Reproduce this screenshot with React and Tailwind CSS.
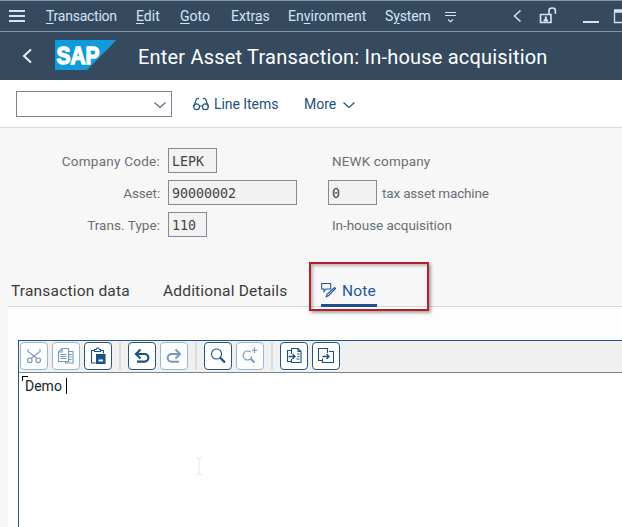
import React from 'react'

const menuItems = [
  { before: '', key: 'T', after: 'ransaction', style: 'w-[90px] tracking-[-0.25px]' },
  { before: '', key: 'E', after: 'dit', style: 'w-[44px]' },
  { before: '', key: 'G', after: 'oto', style: 'w-[51px]' },
  { before: 'Extr', key: 'a', after: 's', style: 'w-[57px]' },
  { before: 'En', key: 'v', after: 'ironment', style: 'w-[97px]' },
  { before: 'S', key: 'y', after: 'stem', style: 'w-[59px] tracking-[-0.15px]' },
]

const icons = {
  cut: (
    <>
      <path d="M8 7v2.500l9 7M20 7v2.500l-9 7" />
      <circle cx="9.800" cy="18.300" r="2.300" />
      <circle cx="18.200" cy="18.300" r="2.300" />
    </>
  ),
  copy: (
    <>
      <path d="M10 6.500h6.500v13H6.500V10zM10 6.500V10H6.500M8.500 12.500h6M8.500 14.500h6M8.500 16.500h6" />
      <path d="M16.500 9.500h4.500v11.500h-7.500v-1.500M16.500 12.500h3M16.500 15h3M16.500 17.500h3" />
    </>
  ),
  paste: (
    <>
      <path d="M10.500 8.500h-3v12.500h4M16.500 8.500h3v3M10.500 9.500v-2h1.500l1-1.500h1.500l1 1.500h1v2z" />
      <path d="M12.500 12.500H21V21.500h-8.500z" fill="currentColor" />
      <path d="M14.500 18.500H19" stroke="#fff" strokeWidth="2" />
    </>
  ),
  undo: <path d="M12.500 7.500 8 12l4.500 4.500M8 12h8.500a3.700 3.700 0 0 1 0 7.700H9" strokeWidth="2.200" />,
  redo: <path d="m15.500 7.500 4.500 4.500-4.500 4.500M20 12h-8.500a3.700 3.700 0 0 0 0 7.700H19" strokeWidth="2" />,
  find: (
    <>
      <circle cx="12.500" cy="12" r="5" />
      <path d="m16 15.500 5 5" strokeWidth="2.200" />
    </>
  ),
  findNext: (
    <>
      <path d="M14.500 10a4.500 4.500 0 1 0 1.500 4.500M18.500 5.500v5.500M15.700 8.300h5.800" />
      <path d="m14.800 17 3.700 3.500" strokeWidth="2" />
    </>
  ),
  load: (
    <>
      <path d="M11.500 8.500h-4v11h4M11.500 12V6.500h6.500l3 3v11h-9.500v-3.500M18 6.500v3h3M17 12h2.500M17.500 14.500h2M16.500 17h3" />
      <path d="M8.500 14.500h6M12.500 12l2.500 2.500-2.500 2.500" strokeWidth="1.400" />
    </>
  ),
  save: (
    <>
      <path d="M15.500 11v-4.500h-9v12h4M17 9.500h4.500v11h-11v-4" />
      <path d="M10.500 14.500H17M14.500 12l2.500 2.500-2.500 2.500" strokeWidth="1.400" />
    </>
  ),
}

const editorGroups = [
  [
    { name: 'cut', disabled: true },
    { name: 'copy', disabled: true },
    { name: 'paste' },
  ],
  [{ name: 'undo' }, { name: 'redo', disabled: true }],
  [{ name: 'find' }, { name: 'findNext', disabled: true }],
  [{ name: 'load' }, { name: 'save' }],
]

const EditorButton = ({ name, disabled }) => (
  <button
    aria-label={name}
    disabled={disabled}
    className={
      disabled
        ? 'w-7 h-7 rounded-[4px] border border-[#9bb7d2] bg-[#fcfdff] text-[#7998b8]'
        : 'w-7 h-7 rounded-[4px] border border-[#255782] bg-white text-[#1b5183]'
    }
  >
    <svg
      className="block w-7 h-7 -m-px"
      viewBox="0 0 28 28"
      fill="none"
      stroke="currentColor"
      strokeWidth="1.1"
    >
      {icons[name]}
    </svg>
  </button>
)

const Field = ({ value, className }) => (
  <div
    className={`h-[25px] border border-[#858b93] bg-[#f2f2f2] pl-[3px] leading-[25px] font-['DejaVu_Sans_Mono',monospace] text-[13.3px] text-[#444] ${className}`}
  >
    {value}
  </div>
)

const MenuBar = () => (
  <div className="flex items-center h-8 border-t border-b border-[#8296aa] text-[#d2e5f8]">
    <svg className="w-[17px] h-[14px] ml-[9px] mr-5" viewBox="0 0 17 14" fill="none" stroke="currentColor" strokeWidth="2">
      <path d="M0 2h16M0 7h16M0 12h16" />
    </svg>
    {menuItems.map((item) => (
      <div key={item.key} className={`shrink-0 text-[14px] leading-5 ${item.style}`}>
        {item.before}
        <span className="underline underline-offset-2 decoration-1">{item.key}</span>
        {item.after}
      </div>
    ))}
    <svg className="w-[178px] h-[30px] shrink-0" viewBox="444 1 178 30" fill="none" stroke="currentColor">
      <path d="M445 12.500h11M445 15.500h11M448 19.500l2.500 2.200 2.500-2.200" strokeWidth="1.200" />
      <path d="m520.500 10.500-6 5.500 6 5.500" strokeWidth="1.500" />
      <path d="M540.500 14.500H551v8h-10.500zM549 14v-3.500q0-2.500 3.200-2.500t3.200 2.500V14" strokeWidth="1.600" />
      <path d="M543.500 21.500v-1.500l1.300-1v-2.500h2V19l1.300 1v1.500z" fill="currentColor" stroke="none" />
      <path d="M583 22h16" strokeWidth="2" />
      <path d="M622 22.500h-7.500v-11" strokeWidth="1.300" />
      <path d="M614 11h8" strokeWidth="3.500" />
    </svg>
  </div>
)

const TitleBar = () => (
  <div className="flex items-center h-12 text-white">
    <svg className="w-[10px] h-4 ml-[22px] mr-[23px]" viewBox="0 0 10 16" fill="none" stroke="#e2effc" strokeWidth="2">
      <path d="M9 1.500 2 8l7 6.500" />
    </svg>
    <svg className="w-[62px] h-[30px] shrink-0 -mt-0.5" viewBox="0 0 62 30">
      <path d="M0 0h61.500L32 30H0z" fill="#129bdb" />
      <text
        x="1.500"
        y="23.500"
        textLength="43"
        lengthAdjust="spacingAndGlyphs"
        fill="#fff"
        stroke="#fff"
        strokeWidth="1.400"
        fontFamily="Liberation Sans, sans-serif"
        fontSize="24.500"
        fontWeight="bold"
      >
        SAP
      </text>
    </svg>
    <h1 className="ml-[21px] mt-px text-[20px] leading-7 tracking-[0.2px] whitespace-nowrap">
      Enter Asset Transaction: In-house acquisition
    </h1>
  </div>
)

const Toolbar = () => (
  <div className="flex items-center h-12 bg-white border-b border-[#d9d9d9] text-[14px] text-[#24507f]">
    <div className="flex items-center justify-end w-[156px] h-[26px] ml-4 pr-[5px] border border-[#7f848a]">
      <svg className="w-3 h-2 mt-0.5" viewBox="0 0 12 8" fill="none" stroke="#496b8b" strokeWidth="1.1">
        <path d="m.5 1.500 5.500 5 5.500-5" />
      </svg>
    </div>
    <svg className="w-4 h-4 ml-[21px]" viewBox="0 0 16 16" fill="none" stroke="currentColor" strokeWidth="1.2">
      <circle cx="3.600" cy="10.700" r="2.900" />
      <circle cx="12.400" cy="10.700" r="2.900" />
      <path d="M6.500 10h3M.700 10.500 3.500 3Q4.500 1.500 6 3M15.300 10.500 12.500 3Q11.500 1.500 10 3" />
    </svg>
    <span className="w-[90px] ml-[5px] mt-0.5 tracking-[-0.05px]">Line Items</span>
    <span className="mt-0.5">More</span>
    <svg className="w-3 h-2 ml-[7px] mt-0.5" viewBox="0 0 12 8" fill="none" stroke="currentColor" strokeWidth="1.2">
      <path d="m.5 1.500 5.500 5 5.500-5" />
    </svg>
  </div>
)

const Tabs = () => (
  <div className="relative flex ml-2 h-[43px] border-b border-[#d8d8d8] text-[15.5px] tracking-[0.18px] text-[#3b3b3b]">
    <div className="w-[151px] pl-[3px] pt-[17px] leading-5">Transaction data</div>
    <div className="w-[162px] pl-1 pt-[17px] leading-5">Additional Details</div>
    <div className="flex w-14 h-[43px] pt-[17px] border-b-[3px] border-[#1d528c] text-[#26579a] leading-5">
      <svg className="w-4 h-4 shrink-0 mt-px mr-[5px]" viewBox="0 0 16 16" fill="none" stroke="currentColor" strokeWidth="1.1">
        <path d="M.700 1.500h9v5.500H5L3 9.500V7H.700z" />
        <path d="m13.500 5.500 1 1-6.700 7-2.500 1.300.7-2.500z" />
      </svg>
      Note
    </div>
    {/* Highlight drawn over the active tab */}
    <div className="absolute left-[301px] -top-[2px] w-[120px] h-[49px] border-2 border-[#b52026] shadow-[2px_2px_3px_rgba(0,0,0,0.35),inset_2px_2px_3px_rgba(0,0,0,0.25)]" />
  </div>
)

const App = () => {
  return (
    <div className="flex flex-col w-[622px] h-[527px] overflow-hidden bg-[#f7f7f7] font-[Roboto,sans-serif]">
      <header className="bg-[#354a5f]">
        <MenuBar />
        <TitleBar />
      </header>
      <Toolbar />

      <section className="flex flex-col gap-[7px] pt-5 h-[136px] text-[13.5px] text-[#6b6f74]">
        <div className="flex items-center h-[25px]">
          <span className="w-40 mr-2 mt-0.5 text-right tracking-[0.25px]">Company Code:</span>
          <Field value="LEPK" className="w-[49px]" />
          <span className="ml-[115px] mt-0.5 tracking-[0.15px]">NEWK company</span>
        </div>
        <div className="flex items-center h-[25px]">
          <span className="w-40 mr-2 mt-0.5 text-right tracking-[-0.15px]">Asset:</span>
          <Field value="90000002" className="w-[129px]" />
          <Field value="0" className="w-[49px] ml-[31px]" />
          <span className="ml-[5px] mt-0.5 tracking-[-0.17px]">tax asset machine</span>
        </div>
        <div className="flex items-center h-[25px]">
          <span className="w-40 mr-2 mt-0.5 text-right tracking-[0.05px]">Trans. Type:</span>
          <Field value="110" className="w-[39px]" />
          <span className="ml-[125px] mt-0.5 tracking-[-0.05px]">In-house acquisition</span>
        </div>
      </section>

      <Tabs />

      <main className="flex flex-col flex-1 ml-2 pl-[10px] pt-[33px] bg-[#fdfdfd]">
        <div className="flex flex-col flex-1 border-t border-l border-[#255782] bg-white">
          <div className="flex items-start h-8 pl-px pt-px border-b border-[#7d858d] bg-[#f0f0f0]">
            {editorGroups.map((group, index) => (
              <div key={group[0].name} className="flex items-center">
                {index > 0 && <div className="w-0.5 h-7 mx-[7px] bg-[#dcdcdc]" />}
                <div className="flex gap-1">
                  {group.map((button) => (
                    <EditorButton key={button.name} {...button} />
                  ))}
                </div>
              </div>
            ))}
          </div>
          <div className="relative flex-1 text-[14px] text-[#222]">
            <div className="absolute left-[3px] top-[3px] w-[6px] h-[5px] border-t border-l border-black" />
            <div className="flex items-center h-[26px] pl-[6px]">
              Demo
              <span className="w-px h-4 ml-1 bg-black" />
            </div>
            <svg className="absolute left-[176px] top-[83px] w-2 h-5" viewBox="0 0 8 20" fill="none" stroke="#e6e6e6">
              <path d="M1 1.500h2l1 1 1-1h2M4 2v16M1 18.500h2l1-1 1 1h2" />
            </svg>
          </div>
        </div>
      </main>
    </div>
  )
}

export default App
